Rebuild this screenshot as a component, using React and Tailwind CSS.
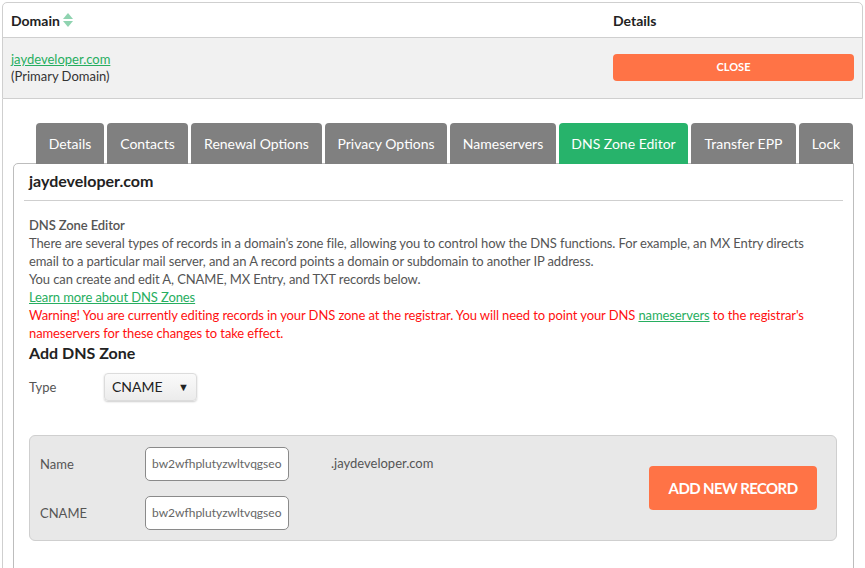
import React from "react";

const tabs = [
  { label: "Details", w: "w-[68px]" },
  { label: "Contacts", w: "w-[81px]" },
  { label: "Renewal Options", w: "w-[131px]" },
  { label: "Privacy Options", w: "w-[122px]" },
  { label: "Nameservers", w: "w-[106px]" },
  { label: "DNS Zone Editor", w: "w-[129px]", active: true },
  { label: "Transfer EPP", w: "w-[105px]" },
  { label: "Lock", w: "w-[54px]" },
];

const SortIcon = () => (
  <svg width="10" height="16" viewBox="0 0 10 16" className="ml-[3px]">
    <path d="M5 1 L10 7 L0 7 Z" fill="#8fd3b0" />
    <path d="M0 9 L10 9 L5 15 Z" fill="#8fd3b0" />
  </svg>
);

const RecordInput = () => (
  <input
    readOnly
    value="bw2wfhplutyzwltvqgseo"
    className="w-[144px] h-[34px] rounded-[5px] border border-[#8a8a8a] bg-white px-[6px] text-[12px] text-[#666] outline-none"
  />
);

export default function App() {
  return (
    <div className="w-[865px] h-[568px] overflow-hidden bg-white font-['Lato',sans-serif] text-[#333]">
      {/* domain table */}
      <div className="ml-[2px] mt-[2px] w-[861px] border border-[#cfcfcf] rounded-t-[5px]">
        <div className="flex items-center h-[35px] border-b border-[#cfcfcf] text-[14px] font-bold text-[#222]">
          <div className="w-[610px] pl-[8px] flex items-center">
            Domain
            <SortIcon />
          </div>
          <div>Details</div>
        </div>
        <div className="flex h-[60px] bg-[#f1f1f1] text-[13px]">
          <div className="w-[610px] pl-[8px] pt-[13px] leading-[17px]">
            <a href="#" className="text-[#27ae60] underline">jaydeveloper.com</a>
            <div>(Primary Domain)</div>
          </div>
          <div className="pt-[16px]">
            <button className="w-[241px] h-[27px] rounded-[4px] bg-[#ff7346] text-white text-[11px] font-bold">
              CLOSE
            </button>
          </div>
        </div>
      </div>

      {/* tabs area */}
      <div className="ml-[2px] h-full border-l border-[#cfcfcf] pl-[10px] pt-[24px]">
        <div className="flex gap-[3px] pl-[23px] relative z-10">
          {tabs.map((t) => (
            <div
              key={t.label}
              className={`${t.w} h-[41px] flex-none flex items-center justify-center rounded-t-[4px] text-[14px] text-white ${
                t.active ? "bg-[#27b36b]" : "bg-[#808080]"
              }`}
            >
              {t.label}
            </div>
          ))}
        </div>
        <div className="w-[841px] h-[420px] border border-[#bdbdbd] rounded-tl-[5px] -mt-px">
          <div className="pl-[15px] pt-[7px] text-[16px] font-bold text-[#222] leading-[20px]">jaydeveloper.com</div>
          <div className="mx-[10px] mt-[9px] border-t border-[#cfcfcf]" />
          <div className="pl-[15px] pr-[20px] pt-[15px] text-[13px] leading-[18px] text-[#555] tracking-[-0.1px]">
            <div className="font-semibold">DNS Zone Editor</div>
            <div>
              There are several types of records in a domain’s zone file, allowing you to control how the DNS functions. For example, an MX Entry directs email to a particular mail server, and an A record points a domain or subdomain to another IP address.
            </div>
            <div>You can create and edit A, CNAME, MX Entry, and TXT records below.</div>
            <a href="#" className="text-[#27ae60] underline">Learn more about DNS Zones</a>
            <div className="text-[#ff1010]">
              Warning! You are currently editing records in your DNS zone at the registrar. You will need to point your DNS{" "}
              <a href="#" className="text-[#27ae60] underline">nameservers</a> to the registrar's nameservers for these changes to take effect.
            </div>
            <div className="text-[16px] font-bold text-[#222] leading-[20px] pt-[1px] tracking-normal">Add DNS Zone</div>
            <div className="flex items-center mt-[10px] tracking-normal">
              <div className="w-[75px]">Type</div>
              <div className="w-[93px] h-[28px] flex items-center justify-between pl-[7px] pr-[7px] rounded-[4px] border border-[#dcdcdc] bg-gradient-to-b from-[#fafafa] to-[#ececec] shadow-[0_1px_2px_rgba(0,0,0,0.2)] text-[14px] text-[#222]">
                <span>CNAME</span>
                <span className="text-[11px]">▼</span>
              </div>
            </div>
            <div className="mt-[34px] w-[808px] h-[106px] rounded-[6px] border border-[#cfcfcf] bg-[#e8e8e8] pl-[10px] pr-[19px] flex items-center justify-between tracking-normal">
              <div className="flex flex-col gap-[15px]">
                <div className="flex items-center">
                  <div className="w-[105px] text-[13px]">Name</div>
                  <RecordInput />
                  <div className="ml-[42px] -mt-[2px] text-[13px]">.jaydeveloper.com</div>
                </div>
                <div className="flex items-center">
                  <div className="w-[105px] text-[13px]">CNAME</div>
                  <RecordInput />
                </div>
              </div>
              <button className="w-[168px] h-[44px] rounded-[4px] bg-[#ff7346] text-white text-[15px] font-bold tracking-[-0.6px]">
                ADD NEW RECORD
              </button>
            </div>
          </div>
        </div>
      </div>
    </div>
  );
}
